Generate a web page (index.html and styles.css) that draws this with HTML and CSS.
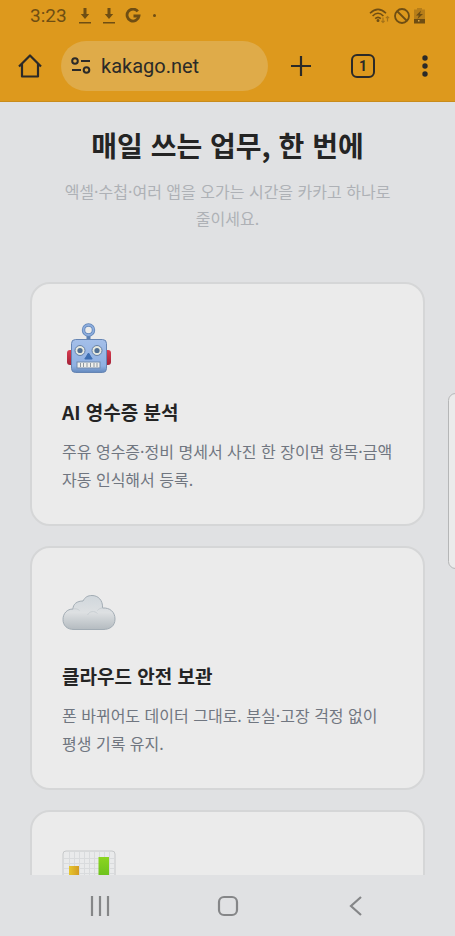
FILE: index.html
```html
<!DOCTYPE html>
<html lang="ko">
<head>
<meta charset="utf-8">
<meta name="viewport" content="width=device-width, initial-scale=1">
<title>kakago.net</title>
<link rel="stylesheet" href="styles.css">
</head>
<body>
<header class="browser">
  <div class="status">
    <span class="clock">3:23</span>
    <svg class="download" width="12" height="16" viewBox="0 0 12 16"><path d="M4.500 0h3v6h2.700L6 11 1.800 6h2.700zM0 14h12v1.500H0z"/></svg>
    <svg class="download" width="12" height="16" viewBox="0 0 12 16"><path d="M4.500 0h3v6h2.700L6 11 1.800 6h2.700zM0 14h12v1.500H0z"/></svg>
    <svg class="google" width="16" height="16" viewBox="0 0 16 16"><path d="M12.800 3.400A6 6 0 1 0 14 8H8.500" fill="none" stroke="currentColor" stroke-width="2.800"/></svg>
    <span class="dot"></span>
    <span class="status-right">
      <svg width="21" height="16" viewBox="0 0 21 16" fill="none" stroke="currentColor" stroke-width="1.600"><path d="M1 5.200Q9 -2.600 17 5.200M3.600 8Q9 2.600 14.400 8M6.200 10.600Q9 8 11.800 10.600"/><circle cx="9" cy="12.500" r=".7" fill="currentColor"/><path d="M14 9.500v5m-1.600-1.600L14 14.500l1.600-1.600M18.500 13.500v-5m-1.600 1.600L18.500 8.500l1.600 1.600" stroke-width="1.200" opacity=".5"/></svg>
      <svg width="16" height="16" viewBox="0 0 16 16" fill="none" stroke="currentColor" stroke-width="1.800"><circle cx="8" cy="8" r="7"/><path d="M3 3l10 10"/></svg>
      <svg width="11" height="16" viewBox="0 0 11 16"><path d="M3 0h5v1.500h3V11H0V1.500h3z" fill="currentColor" opacity=".35"/><path d="M0 11h11v4.500H0zM7 2.500L2 7.500h2.800L3.500 11 9 6H6z" fill="currentColor"/><path d="M4 12h1.500v1.500H4z" fill="#dfab49"/></svg>
    </span>
  </div>
  <div class="toolbar">
    <button class="tool" aria-label="홈"><svg width="24" height="24" viewBox="0 0 24 24" fill="none" stroke="currentColor" stroke-width="2.200" stroke-linejoin="round"><path d="M1 12.500L12 1.500l11 11M4 10v12.500h16V10"/></svg></button>
    <button class="address">
      <svg width="20" height="18" viewBox="0 0 20 18" fill="none" stroke="currentColor" stroke-width="2"><circle cx="4" cy="4" r="2.800"/><path d="M10 4h9M1 13h9"/><circle cx="15.500" cy="13" r="2.800"/></svg>
      <span>kakago.net</span>
    </button>
    <div class="actions">
      <button class="tool" aria-label="새 탭"><svg width="20" height="20" viewBox="0 0 20 20" fill="none" stroke="currentColor" stroke-width="2.200"><path d="M10 0v20M0 10h20"/></svg></button>
      <button class="tool tabs" aria-label="탭 1개">1</button>
      <button class="tool" aria-label="메뉴"><svg width="6" height="22" viewBox="0 0 6 22" fill="currentColor"><circle cx="3" cy="3" r="2.700"/><circle cx="3" cy="11" r="2.700"/><circle cx="3" cy="19" r="2.700"/></svg></button>
    </div>
  </div>
</header>

<main class="page">
  <h1>매일 쓰는 업무, 한 번에</h1>
  <p class="lead">엑셀·수첩·여러 앱을 오가는 시간을 카카고 하나로 줄이세요.</p>
  <div class="cards">
    <article class="card">
      <svg class="emoji" viewBox="0 0 54 54">
        <defs>
          <linearGradient id="face" x1="0" y1="0" x2="0" y2="1"><stop offset="0" stop-color="#a4bfe9"/><stop offset=".8" stop-color="#8fb0e2"/><stop offset="1" stop-color="#6288bd"/></linearGradient>
          <linearGradient id="ear" x1="0" y1="0" x2="0" y2="1"><stop offset="0" stop-color="#d83c50"/><stop offset="1" stop-color="#a32238"/></linearGradient>
        </defs>
        <path d="M24.500 12h4v6h-4z" fill="#5b7fb0"/>
        <circle cx="26.500" cy="8" r="5" fill="none" stroke="#6086b9" stroke-width="3.400"/>
        <circle cx="26.500" cy="8" r="5" fill="none" stroke="#8eaddd" stroke-width="1.800"/>
        <rect x="5" y="28" width="7" height="15" rx="3" fill="url(#ear)"/>
        <rect x="42" y="28" width="7" height="15" rx="3" fill="url(#ear)"/>
        <rect x="9.500" y="17.500" width="35" height="33" rx="4" fill="url(#face)" stroke="#6685b3"/>
        <g stroke="#6680a5"><circle cx="18" cy="28.500" r="5" fill="#e5e8df"/><circle cx="35" cy="28.500" r="5" fill="#e5e8df"/></g>
        <circle cx="18" cy="28.500" r="2.600" fill="#506f93"/><circle cx="35" cy="28.500" r="2.600" fill="#506f93"/>
        <path d="M26.500 31l3.700 6h-7.400z" fill="#3e6fb2" stroke="#3e6fb2" stroke-linejoin="round"/>
        <rect x="15" y="40" width="23" height="6" fill="#eeeeeb" stroke="#7189ad"/>
        <path d="M18.500 41v4M21.500 41v4M25 41v4M28.500 41v4M32 41v4M35 41v4" stroke="#8d969f"/>
      </svg>
      <h2>AI 영수증 분석</h2>
      <p>주유 영수증·정비 명세서 사진 한 장이면 항목·금액 자동 인식해서 등록.</p>
    </article>
    <article class="card">
      <svg class="emoji" viewBox="0 0 54 54">
        <defs>
          <linearGradient id="cloud" x1="0" y1="0" x2="0" y2="1"><stop offset="0" stop-color="#d0d7dc"/><stop offset=".5" stop-color="#dde0e2"/><stop offset="1" stop-color="#b4bbc0"/></linearGradient>
        </defs>
        <path d="M12 43.500C5 43.500 1 39.500 1 33.500c0-6 4-10.500 10-10.500 0-5 4-8 10-8 2-4 5-5.500 9-5.500 6 0 11 4.500 10.500 12.500C48 21.500 53 26 53 33s-5 10.500-12 10.500z" fill="url(#cloud)" stroke="#a2acb4"/>
        <path d="M25.500 29c2-4 7-4.500 10-1.500M11 23c3-.6 5 0 6.500 1.500M40.500 22c-2 0-4 1-5 2.500" fill="none" stroke="#c9cfd3"/>
      </svg>
      <h2>클라우드 안전 보관</h2>
      <p>폰 바뀌어도 데이터 그대로. 분실·고장 걱정 없이 평생 기록 유지.</p>
    </article>
    <article class="card">
      <svg class="emoji" viewBox="0 0 54 54">
        <defs>
          <linearGradient id="gold"><stop offset="0" stop-color="#e6c62e"/><stop offset="1" stop-color="#d39c23"/></linearGradient>
          <linearGradient id="green" x1="0" y1="0" x2="0" y2="1"><stop offset="0" stop-color="#8bd520"/><stop offset="1" stop-color="#43a719"/></linearGradient>
        </defs>
        <rect x="1" y="1" width="52" height="52" rx="3" fill="#e9eaeb" stroke="#c6c8ca"/>
        <path d="M2 8.500h50M2 13.500h50M2 18.500h50M2 23.500h50M2 28.500h50M2 33.500h50M2 38.500h50M2 43.500h50M7.500 2v50M12.500 2v50M17.500 2v50M22.500 2v50M27.500 2v50M32.500 2v50M37.500 2v50M42.500 2v50M47.500 2v50" stroke="#d9dbdd"/>
        <path d="M7 16h10v36H7z" fill="url(#gold)"/><path d="M22 32h10v20H22z" fill="#4888cb"/><path d="M36.500 7H47v45H36.500z" fill="url(#green)"/>
      </svg>
    </article>
  </div>
</main>

<nav class="system">
  <button aria-label="최근 앱"><svg width="20" height="20" viewBox="0 0 20 20" stroke="currentColor" stroke-width="2.200"><path d="M2 0v20M10 0v20M18 0v20"/></svg></button>
  <button aria-label="홈 화면"><svg width="22" height="22" viewBox="0 0 22 22" fill="none" stroke="currentColor" stroke-width="2.200"><rect x="2" y="2" width="18" height="18" rx="5"/></svg></button>
  <button aria-label="뒤로"><svg width="20" height="20" viewBox="0 0 20 20" fill="none" stroke="currentColor" stroke-width="2.200"><path d="M15 1L5 10l10 9"/></svg></button>
</nav>
<div class="edge-handle"></div>
</body>
</html>
```
FILE: styles.css
```css
* {
  box-sizing: border-box;
}

body {
  margin: 0;
  height: 100vh;
  display: flex;
  flex-direction: column;
  overflow: hidden;
  position: relative;
  background: #e0e1e3;
  color: #242424;
  font-family: "Noto Sans CJK KR", sans-serif;
  word-break: keep-all;
}

button {
  display: flex;
  align-items: center;
  justify-content: center;
  padding: 0;
  border: 0;
  background: none;
  color: inherit;
  font: inherit;
}

svg {
  display: block;
  flex: none;
}

.browser {
  flex: none;
  background: #dd991d;
  border-bottom: 1px solid #c98c1c;
  color: #2b2a28;
  font-family: Roboto, sans-serif;
}

.status {
  display: flex;
  align-items: center;
  gap: 12px;
  height: 31px;
  padding: 0 30px;
  color: #6f4e13;
}

.clock {
  font-size: 19px;
  line-height: 31px;
}

.download {
  fill: currentColor;
}

.google {
  margin-left: -2px;
}

.dot {
  width: 3px;
  height: 3px;
  border-radius: 50%;
  background: currentColor;
}

.status-right {
  display: flex;
  gap: 4px;
  margin-left: auto;
}

.toolbar {
  display: flex;
  align-items: center;
  height: 70px;
  padding: 0 12px 0 18px;
}

.tool {
  width: 24px;
  height: 24px;
}

.address {
  flex: 1;
  justify-content: flex-start;
  gap: 10px;
  height: 50px;
  margin-left: 19px;
  padding: 0 10px;
  border-radius: 25px;
  background: #dfab49;
  font-size: 20px;
}

.actions {
  display: flex;
  justify-content: space-between;
  width: 175px;
  padding: 0 6px 0 21px;
}

.tabs {
  border: 2px solid currentColor;
  border-radius: 6px;
  font-size: 14px;
  font-weight: 700;
}

.page {
  flex: 1;
  min-height: 0;
  overflow: hidden;
  padding: 22px 30px 0;
}

h1,
h2,
p {
  margin: 0;
}

h1 {
  font-size: 28px;
  line-height: 42px;
  font-weight: 700;
  text-align: center;
}

.lead {
  margin-top: 12px;
  padding: 0 24px;
  color: #aeb1b6;
  font-size: 16px;
  line-height: 27px;
  text-align: center;
}

.cards {
  display: grid;
  gap: 20px;
  margin-top: 50px;
}

.card {
  padding: 38px 28px 31px 30px;
  border: 2px solid #d5d6d7;
  border-radius: 20px;
  background: #ebebeb;
}

.emoji {
  width: 54px;
  height: 54px;
}

h2 {
  margin-top: 21px;
  font-size: 19px;
  line-height: 30px;
  font-weight: 700;
}

.card p {
  margin-top: 10px;
  color: #707680;
  font-size: 16px;
  line-height: 28px;
}

.system {
  display: flex;
  flex: none;
  align-items: center;
  justify-content: space-around;
  height: 61px;
  padding: 0 36px 0 37px;
  background: #e0e1e3;
  color: #858688;
}

.edge-handle {
  position: absolute;
  top: 42%;
  right: -8px;
  width: 15px;
  height: 176px;
  border: 1px solid #b5b6b7;
  border-radius: 8px;
  background: #ebebeb;
}
```
